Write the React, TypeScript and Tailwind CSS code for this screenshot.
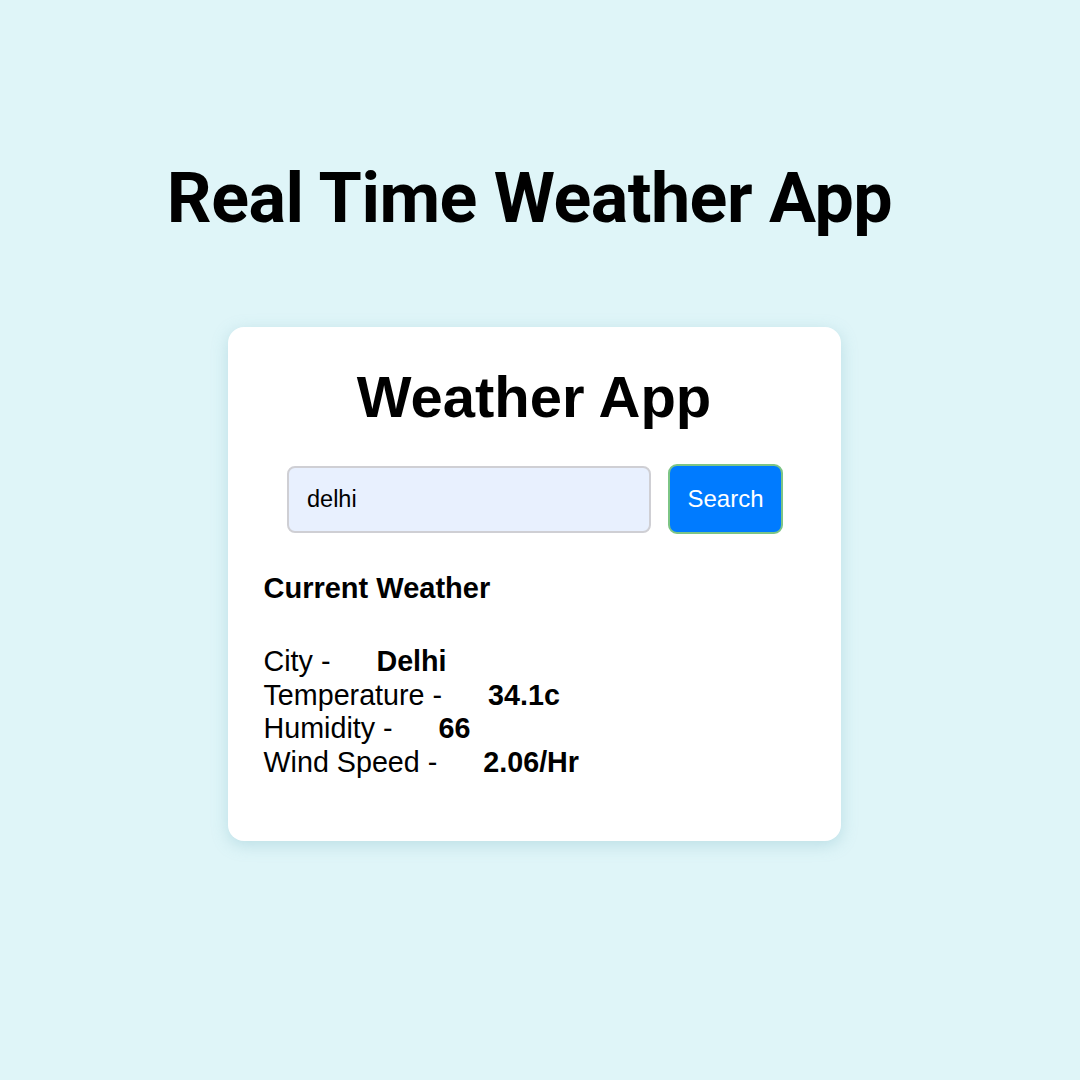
import { useState } from "react";

const rows = [
  { label: "City -", value: "Delhi" },
  { label: "Temperature -", value: "34.1c" },
  { label: "Humidity -", value: "66" },
  { label: "Wind Speed -", value: "2.06/Hr" },
];

export default function App() {
  const [city, setCity] = useState("delhi");

  return (
    <div className="w-[1080px] h-[1080px] bg-[#dff5f8] flex flex-col items-center overflow-hidden">
      <h1 className="mt-[156px] mr-[21px] text-[70px] font-bold leading-[84px] text-black font-['Roboto',sans-serif] tracking-[-0.5px]">
        Real Time Weather App
      </h1>

      <div className="mt-[87px] mr-[12px] w-[613px] h-[514px] bg-white rounded-[16px] shadow-[0_4px_16px_rgba(120,180,195,0.35)] font-['Liberation_Sans',Arial,sans-serif] text-black">
        <h2 className="mt-[36px] text-center text-[58px] font-bold leading-[68px]">Weather App</h2>

        <div className="mt-[33px] flex justify-center gap-[17px] pl-[2px]">
          <input
            value={city}
            onChange={(e) => setCity(e.target.value)}
            className="w-[364px] h-[67px] mt-[2px] px-[18px] bg-[#e8f0fe] border-2 border-[#cfcfd4] rounded-[8px] text-[23.5px] outline-none"
          />
          <button className="w-[115px] h-[70px] bg-[#007bff] border-2 border-[#7dc585] rounded-[9px] text-white text-[24px]">
            Search
          </button>
        </div>

        {/* Current weather */}
        <div className="px-[36px] mt-[38px]">
          <h3 className="text-[29px] font-bold leading-[32px]">Current Weather</h3>
          <div className="mt-[41px] text-[28.7px] leading-[33.5px]">
            {rows.map((r) => (
              <div key={r.label}>
                {r.label}
                <span className="font-bold ml-[46px]">{r.value}</span>
              </div>
            ))}
          </div>
        </div>
      </div>
    </div>
  );
}
